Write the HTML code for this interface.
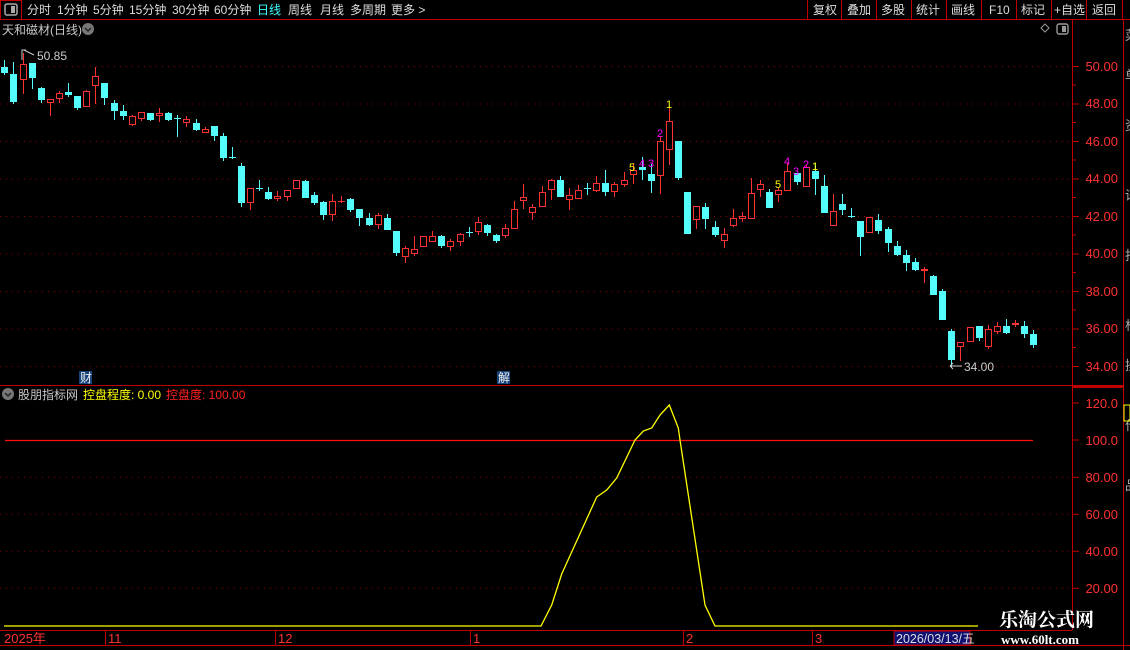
<!DOCTYPE html>
<html><head><meta charset="utf-8">
<style>
html,body{margin:0;padding:0;background:#000;width:1130px;height:650px;overflow:hidden}
body{font-family:"Liberation Sans","Noto Sans CJK SC",sans-serif;position:relative}
</style></head><body>
<svg id="s" width="1130" height="650" style="position:absolute;left:0;top:0" font-family="Liberation Sans, Noto Sans CJK SC, sans-serif">
<line x1="0" y1="19.5" x2="1130" y2="19.5" stroke="#c00000"/>
<rect x="0.5" y="0.5" width="21" height="19" fill="none" stroke="#c00000"/>
<rect x="5" y="4" width="12" height="11" rx="2" fill="none" stroke="#aaa" stroke-width="1.5"/>
<rect x="11" y="6" width="4" height="7" fill="#aaa"/>
<g fill="#ddd" font-size="12">
<text x="27" y="14">分时</text><text x="57" y="14">1分钟</text><text x="93" y="14">5分钟</text>
<text x="129" y="14">15分钟</text><text x="172" y="14">30分钟</text><text x="214" y="14">60分钟</text>
<text x="257" y="14" fill="#40ffff">日线</text><text x="288" y="14">周线</text><text x="320" y="14">月线</text>
<text x="350" y="14">多周期</text><text x="391" y="14">更多 &gt;</text>
<text x="813" y="14">复权</text><text x="847" y="14">叠加</text><text x="881" y="14">多股</text>
<text x="916" y="14">统计</text><text x="951" y="14">画线</text><text x="989" y="14">F10</text>
<text x="1021" y="14">标记</text><text x="1054" y="14">+自选</text><text x="1092" y="14">返回</text>
</g>
<g stroke="#c00000">
<line x1="807.5" y1="0" x2="807.5" y2="19"/><line x1="841.5" y1="0" x2="841.5" y2="19"/>
<line x1="876.5" y1="0" x2="876.5" y2="19"/><line x1="911.5" y1="0" x2="911.5" y2="19"/>
<line x1="946.5" y1="0" x2="946.5" y2="19"/><line x1="981.5" y1="0" x2="981.5" y2="19"/>
<line x1="1016.5" y1="0" x2="1016.5" y2="19"/><line x1="1051.5" y1="0" x2="1051.5" y2="19"/>
<line x1="1086.5" y1="0" x2="1086.5" y2="19"/><line x1="1122.5" y1="0" x2="1122.5" y2="19"/>
</g>
<text x="2" y="34" fill="#c8c8c8" font-size="12">天和磁材(日线)</text>
<circle cx="88" cy="29" r="6" fill="#777"/>
<path d="M85 28 L88 31 L91 28" stroke="#222" stroke-width="1.5" fill="none"/>
<path d="M1045 24 L1049 28 L1045 32 L1041 28 Z" fill="none" stroke="#999"/>
<rect x="1057" y="24" width="11" height="10" rx="2" fill="none" stroke="#999" stroke-width="1.4"/>
<rect x="1062" y="26" width="4" height="6" fill="#999"/>
<line x1="1072.5" y1="20" x2="1072.5" y2="630" stroke="#c00000"/>
<line x1="1123.5" y1="20" x2="1123.5" y2="650" stroke="#c00000"/>
<line x1="0" y1="385.5" x2="1123" y2="385.5" stroke="#c00000"/>
<line x1="1072" y1="387" x2="1123" y2="387" stroke="#c00000" stroke-width="2"/>
<g id="grid"></g>
<g id="candles"></g>
<g fill="#ff3232" font-size="13" text-anchor="end">
<text x="1118" y="71">50.00</text><text x="1118" y="108">48.00</text><text x="1118" y="146">46.00</text>
<text x="1118" y="183">44.00</text><text x="1118" y="221">42.00</text><text x="1118" y="258">40.00</text>
<text x="1118" y="296">38.00</text><text x="1118" y="333">36.00</text><text x="1118" y="371">34.00</text>
<text x="1118" y="408">120.0</text><text x="1118" y="445">100.0</text><text x="1118" y="482">80.00</text>
<text x="1118" y="519">60.00</text><text x="1118" y="556">40.00</text><text x="1118" y="593">20.00</text>
</g>
<path d="M22 60 L22 50 L26 50 M24 50 L34 55" stroke="#ccc" fill="none"/>
<text x="37" y="60" fill="#ccc" font-size="12">50.85</text>
<path d="M950 366 L962 366 M950 366 L953 363 M950 366 L953 369" stroke="#ccc" fill="none"/>
<text x="964" y="371" fill="#ccc" font-size="12">34.00</text>
<rect x="79" y="371" width="13" height="13" fill="#16427a"/>
<text x="80" y="382" fill="#eee" font-size="12">财</text>
<rect x="497" y="371" width="13" height="13" fill="#16427a"/>
<text x="498" y="382" fill="#eee" font-size="12">解</text>
<g font-size="11">
<text x="629" y="171" fill="#ffff00">5</text><text x="639" y="167" fill="#ff00ff">4</text>
<text x="648" y="167" fill="#ff00ff">3</text><text x="657" y="137" fill="#ff00ff">2</text>
<text x="666" y="108" fill="#ffff00">1</text>
<text x="775" y="188" fill="#ffff00">5</text><text x="784" y="165" fill="#ff00ff">4</text>
<text x="793" y="175" fill="#ff00ff">3</text><text x="803" y="168" fill="#ff00ff">2</text>
<text x="812" y="170" fill="#ffff00">1</text>
</g>
<circle cx="8" cy="394" r="6" fill="#777"/>
<path d="M5 393 L8 396 L11 393" stroke="#222" stroke-width="1.5" fill="none"/>
<text x="18" y="399" fill="#c8c8c8" font-size="12">股朋指标网</text>
<text x="83" y="399" fill="#ffff00" font-size="12">控盘程度: 0.00</text>
<text x="166" y="399" fill="#ff2020" font-size="12">控盘度: 100.00</text>
<line x1="5" y1="440.5" x2="1033" y2="440.5" stroke="#ff1010" stroke-width="1.3"/>
<polyline fill="none" stroke="#ffff00" stroke-width="1.3" points="4,626 541,626 551.7,605 561.7,574 596.7,497 606.7,490 616.7,478 635,440 643.3,431 651.7,428 660,415 669.3,405 678.3,428 680,440 705,605 715,626 978,626"/>
<line x1="0" y1="630.5" x2="1072" y2="630.5" stroke="#c00000"/>
<line x1="0" y1="645.5" x2="1130" y2="645.5" stroke="#c00000"/>
<g stroke="#c00000">
<line x1="105.5" y1="630" x2="105.5" y2="645"/><line x1="275.5" y1="630" x2="275.5" y2="645"/>
<line x1="470.5" y1="630" x2="470.5" y2="645"/><line x1="683.5" y1="630" x2="683.5" y2="645"/>
<line x1="812.5" y1="630" x2="812.5" y2="645"/>
</g>
<g fill="#ff3232" font-size="13">
<text x="4" y="643">2025年</text><text x="108" y="643">11</text><text x="278" y="643">12</text>
<text x="473" y="643">1</text><text x="686" y="643">2</text><text x="815" y="643">3</text>
</g>
<rect x="894" y="631" width="76" height="14" fill="#101070" stroke="#c00000"/>
<text x="896" y="643" fill="#ddd" font-size="12.5">2026/03/13/五</text>
<text x="999" y="626" fill="#fff" font-size="19" font-weight="bold" font-family="Noto Serif CJK SC, serif">乐淘公式网</text>
<text x="1001" y="644" fill="#fff" font-size="13" font-weight="bold" font-family="Liberation Serif, serif">www.60lt.com</text>
<g fill="#aaa" font-size="13"><text x="1125" y="40">菜</text><text x="1125" y="80">单</text><text x="1125" y="130">资</text><text x="1125" y="200">讯</text><text x="1125" y="260">指</text><text x="1125" y="330">标</text><text x="1125" y="370">操</text><text x="1125" y="430">作</text><text x="1125" y="490">品</text></g>
<rect x="1124" y="405" width="6" height="16" fill="none" stroke="#ff0"/>
</svg>
<script>
var ns="http://www.w3.org/2000/svg";
function el(n,a,p){var e=document.createElementNS(ns,n);for(var k in a)e.setAttribute(k,a[k]);p.appendChild(e);return e;}
var g=document.getElementById('grid');
[66,103.5,141,178.5,216,253.5,291,328.5,366].forEach(function(y){el('line',{x1:0,y1:y+.5,x2:1072,y2:y+.5,stroke:'#8a0000','stroke-dasharray':'1 5'},g);el('line',{x1:1072,y1:y+.5,x2:1079,y2:y+.5,stroke:'#c00000'},g);});
[477.3,514.3,551.3,588.3].forEach(function(y){el('line',{x1:0,y1:y,x2:1072,y2:y,stroke:'#8a0000','stroke-dasharray':'1 5'},g);el('line',{x1:1072,y1:y,x2:1079,y2:y,stroke:'#c00000'},g);});
[403,440].forEach(function(y){el('line',{x1:1072,y1:y,x2:1079,y2:y,stroke:'#c00000'},g);});
for(var y=85;y<385;y+=37.5)el('line',{x1:1072,y1:y,x2:1076,y2:y,stroke:'#c00000'},g);
var D=[
['c',67,73,60,75],['c',74,102,62,104],['r',64,80,53,94],['c',63,78,63,89],['c',88,100,87,103],['r',99,103,99,116],['r',93,99,91,103],['c',92,95,83,97],['c',96,108,96,110],['r',91,107,90,107],
['r',76,86,67,104],['c',83,98,83,105],['c',103,111,100,120],['c',111,116,105,120],['r',116,125,115,126],['r',112,119,112,121],['c',113,120,113,121],['r',113,116,108,122],['c',113,120,112,121],['c',118,118,115,137],
['r',119,123,116,127],['c',123,130,119,131],['r',129,133,127,133],['c',126,136,126,141],['c',136,158,133,161],['c',157,157,147,159],['c',166,203,163,207],['r',188,203,188,210],['c',188,188,180,191],['c',192,199,187,200],
['r',196,199,191,201],['r',190,197,190,201],['r',180,189,180,189],['c',181,198,180,198],['c',195,203,192,205],['c',202,215,201,220],['r',201,215,194,221],['r',201,201,196,203],['c',199,210,198,212],['c',209,218,209,226],
['c',218,225,213,226],['r',215,225,213,229],['c',218,230,214,230],['c',231,253,231,256],['r',248,257,246,263],['r',249,254,236,256],['r',236,247,236,247],['r',236,242,231,242],['c',236,246,235,248],['r',241,247,239,251],
['r',234,242,233,246],['c',232,232,227,237],['r',222,232,217,235],['c',225,233,224,236],['c',235,241,234,243],['r',228,236,224,238],['r',209,229,201,229],['r',197,201,184,209],['r',207,213,204,220],['r',192,207,186,207],
['r',180,190,179,200],['c',180,197,176,197],['r',195,200,188,210],['r',190,199,185,199],['c',188,188,183,195],['r',183,191,176,192],['c',183,192,170,196],['r',184,192,182,197],['r',180,185,172,187],['r',170,175,163,184],
['c',167,170,157,180],['c',174,181,164,193],['r',141,176,137,194],['r',121,150,108,165],['c',141,178,141,180],['c',192,234,192,234],['r',206,220,206,229],['c',207,219,203,229],['c',227,235,221,237],['r',234,241,228,248],
['r',218,226,209,227],['r',216,219,212,222],['r',193,219,178,219],['r',184,190,180,197],['c',192,208,189,208],['r',190,195,187,202],['r',171,191,163,191],['c',173,182,173,185],['r',167,187,165,187],['c',171,179,163,195],
['c',186,213,175,213],['r',211,226,194,226],['c',204,210,194,215],['c',216,216,208,218],['c',221,237,221,256],['r',217,233,217,233],['c',220,231,214,234],['c',229,243,227,252],['c',246,255,241,256],['c',255,263,250,271],
['c',262,270,258,271],['r',269,271,267,283],['c',276,295,275,295],['c',291,320,289,320],['c',331,360,329,367],['r',342,347,342,361],['r',327,342,327,342],['c',326,338,326,341],['r',329,347,325,349],['r',326,332,322,334],
['c',326,333,319,334],['r',323,325,320,327],['c',326,334,321,338],['c',334,345,330,348]];
var cg=document.getElementById('candles');
D.forEach(function(d,i){var x=Math.round(4.3+i*9.106);var col=d[0]=='c'?'#54fcfc':'#ff3232';
var t=d[1],b=d[2];
if(d[0]=='c'){
 el('line',{x1:x+.5,y1:d[3],x2:x+.5,y2:d[4],stroke:col},cg);
 if(b-t<1)el('line',{x1:x-3,y1:t+.5,x2:x+4,y2:t+.5,stroke:col},cg);
 else el('rect',{x:x-3,y:t,width:7,height:b-t,fill:col},cg);
}else{
 if(d[3]<t)el('line',{x1:x+.5,y1:d[3],x2:x+.5,y2:t,stroke:col},cg);
 if(d[4]>b)el('line',{x1:x+.5,y1:b,x2:x+.5,y2:d[4],stroke:col},cg);
 if(b-t<1)el('line',{x1:x-3,y1:t+.5,x2:x+4,y2:t+.5,stroke:col},cg);
 else el('rect',{x:x-2.5,y:t+.5,width:6,height:b-t-1,fill:'none',stroke:col},cg);
}});
</script>
</body></html>
